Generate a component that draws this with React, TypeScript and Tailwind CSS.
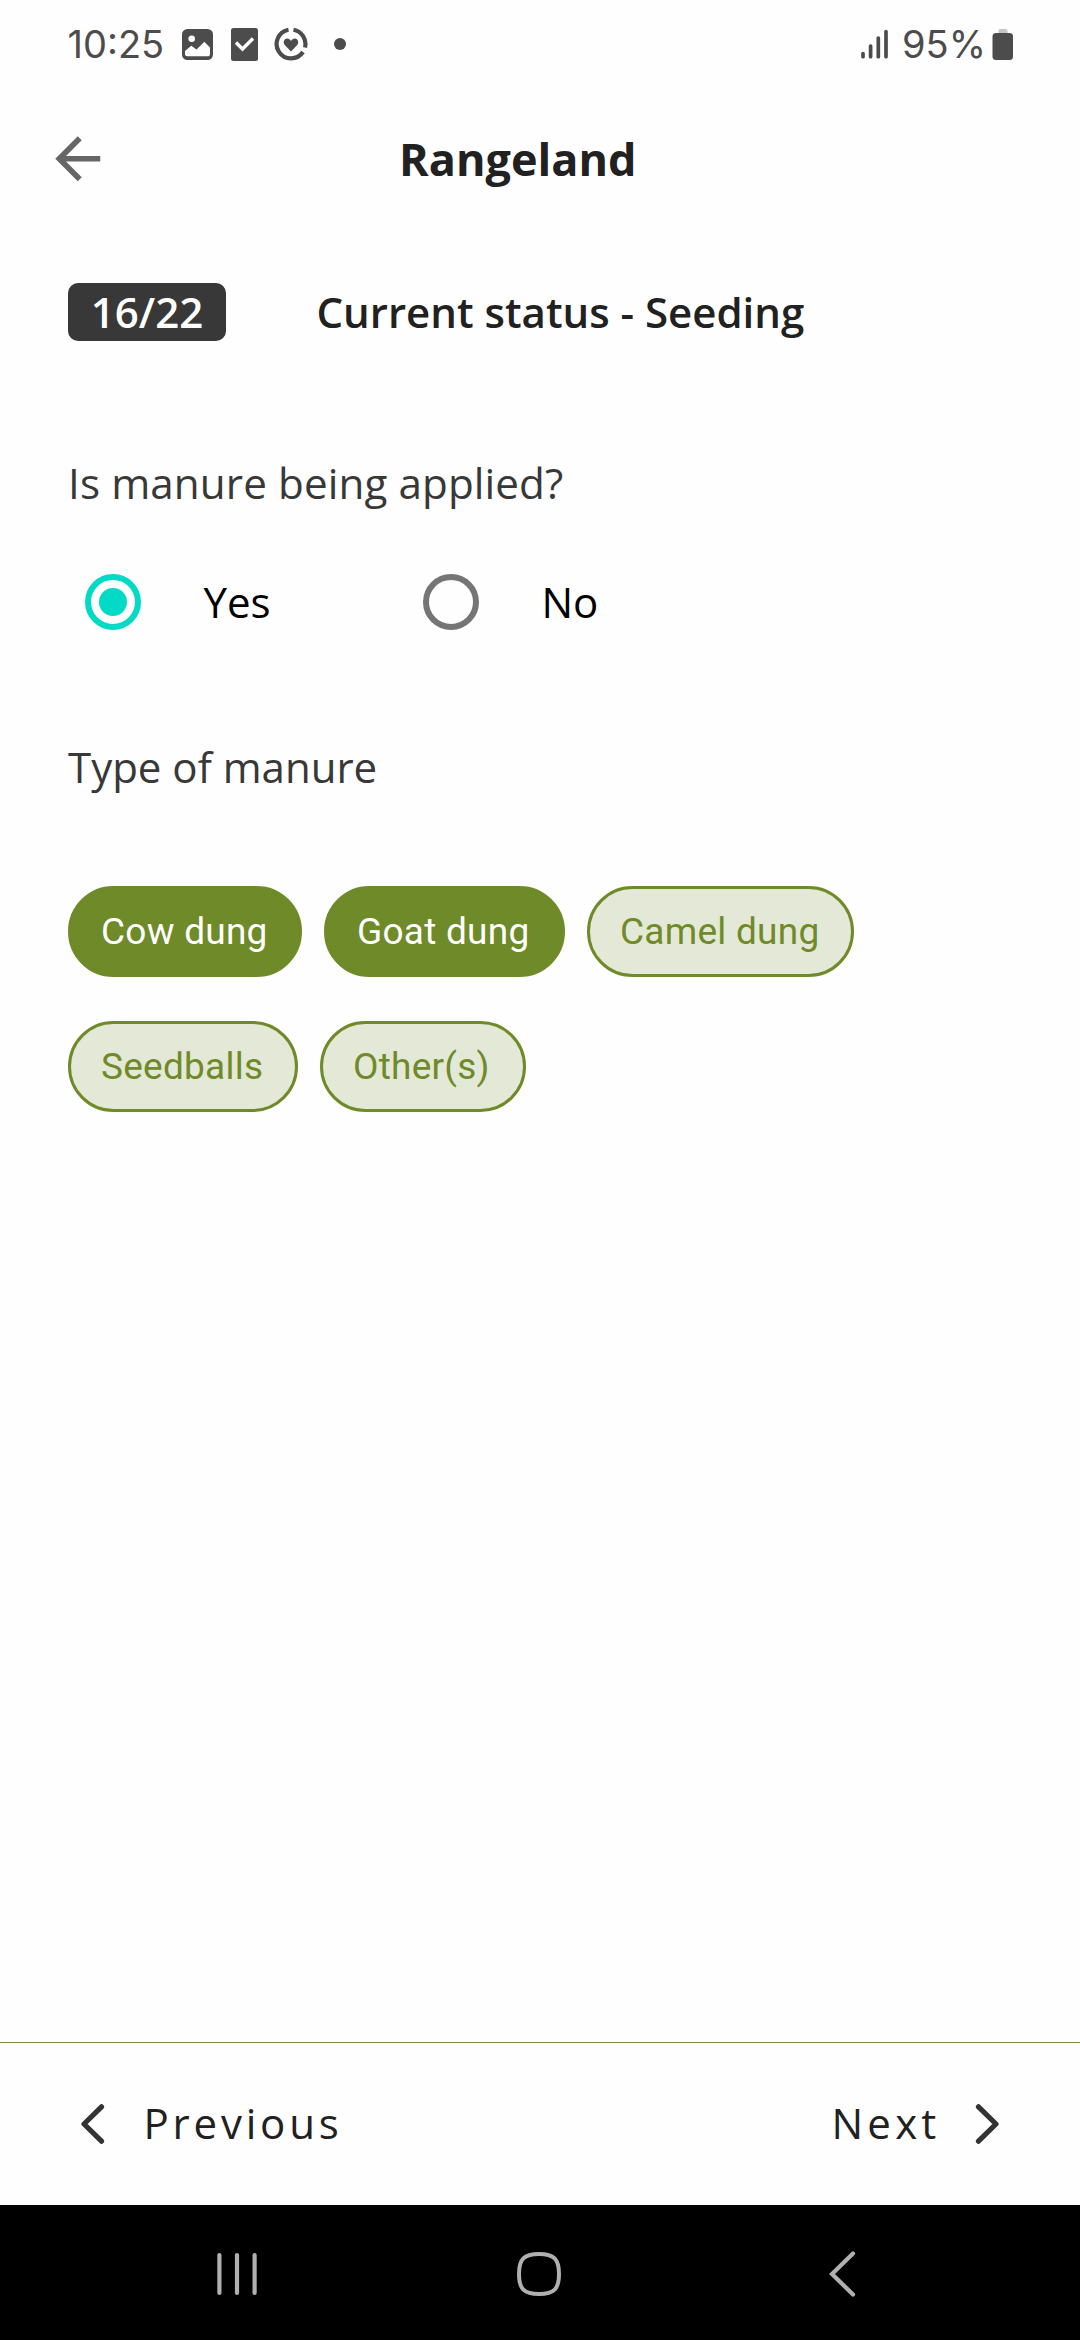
import React, { useState } from "react";

function StatusBar() {
  return (
    <div className="flex h-[88px] shrink-0 items-center justify-between pr-[66px] pl-[67.5px] font-[Inter,sans-serif] text-[#4c4c4c]">
      <div className="flex items-center">
        <span className="w-[114.5px] text-[38px] leading-none whitespace-nowrap">10:25</span>
        <svg className="h-[31px] w-[31px]" viewBox="0 0 31 31">
          <rect width="31" height="31" rx="5.5" fill="#4c4c4c" />
          <circle cx="9.7" cy="9.7" r="3.3" fill="#fefefe" />
          <path d="M3 24.5v-2.500L9.300 16.800l5.200 3.700L22.300 12.800 28 18.500v6.200a2.600 2.600 0 0 1-2.600 2.600H5.600A2.600 2.600 0 0 1 3 24.500Z" fill="#fefefe" />
        </svg>
        <svg className="ml-[18px] h-[33px] w-[27px]" viewBox="0 0 27 33">
          <rect width="27" height="33" rx="2.500" fill="#4c4c4c" />
          <path d="m5 14.500 6.500 6.500L22 10.500" fill="none" stroke="#fefefe" strokeWidth="3.400" />
        </svg>
        <svg className="ml-[16px] h-[34px] w-[34px]" viewBox="0 0 34 34">
          <g fill="none" stroke="#4c4c4c" strokeWidth="4.200">
            <path d="M19.500 2.800A14.400 14.400 0 0 1 31 20.500" />
            <path d="M29 25A14.400 14.400 0 1 1 14.500 2.800" />
          </g>
          <path d="M17 24.500 11 18.300C8.600 15.700 10 11.500 13 11.500c1.900 0 3.200 1 4 2.400.8-1.400 2.100-2.400 4-2.400 3 0 4.400 4.200 2 6.800Z" fill="#4c4c4c" />
        </svg>
        <span className="ml-[26px] h-3 w-3 rounded-full bg-[#4c4c4c]" />
      </div>
      <div className="flex items-center">
        <svg className="h-[30px] w-[28px]" viewBox="0 0 28 30" stroke="#4c4c4c" strokeWidth="3.700" strokeLinecap="round">
          <path d="M2 24.500v3.200M9.600 17v10.700M17.300 9v18.700M25 2.500v25.200" />
        </svg>
        <span className="ml-[13px] w-[90px] text-[38px] leading-none whitespace-nowrap">95%</span>
        <svg className="h-[32px] w-[22px]" viewBox="0 0 22 32">
          <path d="M6.500 6V3a2 2 0 0 1 2-2h5a2 2 0 0 1 2 2v3Z" fill="#c4c4c4" />
          <rect x=".5" y="5" width="20.500" height="27" rx="3.500" fill="#4c4c4c" />
        </svg>
      </div>
    </div>
  );
}

function Header() {
  return (
    <header className="flex h-[141px] shrink-0 items-center pl-[43.5px]">
      <svg className="h-[67.5px] w-[67.5px]" viewBox="0 0 24 24" fill="#666666">
        <path d="M20 11H7.830l5.590-5.590L12 4l-8 8 8 8 1.410-1.410L7.830 13H20v-2z" />
      </svg>
      <h1 className="ml-[288px] text-[45px] leading-none font-bold text-[#212121]">Rangeland</h1>
    </header>
  );
}

function Radio({ label, checked, onSelect }: { label: string; checked: boolean; onSelect: () => void }) {
  return (
    <button onClick={onSelect} className="flex w-[338px] items-center">
      <span
        className={
          checked
            ? "flex h-14 w-14 items-center justify-center rounded-full border-[6px] border-[#03dac5]"
            : "flex h-14 w-14 items-center justify-center rounded-full border-[6px] border-[#757575]"
        }
      >
        {checked && <span className="h-7 w-7 rounded-full bg-[#03dac5]" />}
      </span>
      <span className="ml-[62.5px] text-[42px] leading-[56px] text-black">{label}</span>
    </button>
  );
}

function Chip({ label, width, selected, onToggle }: { label: string; width: string; selected: boolean; onToggle: () => void }) {
  return (
    <button
      onClick={onToggle}
      className={`${width} ${
        selected ? "bg-[#6f8a28] text-white" : "bg-[#e4e8d7] text-[#6f8a28]"
      } flex h-[91px] items-center rounded-full border-[3px] border-[#6f8a28] pl-[30px] font-[Roboto,sans-serif] text-[37px] leading-none tracking-[0.25px] whitespace-nowrap`}
    >
      {label}
    </button>
  );
}

const manureTypes = [
  { label: "Cow dung", width: "w-[234px]" },
  { label: "Goat dung", width: "w-[241px]" },
  { label: "Camel dung", width: "w-[267px]" },
  { label: "Seedballs", width: "w-[230px]" },
  { label: "Other(s)", width: "w-[206px]" },
];

export default function App() {
  const [applied, setApplied] = useState(true);
  const [selected, setSelected] = useState<string[]>(["Cow dung", "Goat dung"]);
  const toggle = (label: string) =>
    setSelected((s) => (s.includes(label) ? s.filter((x) => x !== label) : [...s, label]));

  return (
    <div className="flex h-[2340px] w-[1080px] flex-col overflow-hidden bg-[#fefefe] font-['Open_Sans',sans-serif]">
      <StatusBar />
      <Header />
      <main className="flex flex-1 flex-col px-[68px] pt-[54px] text-[42px] leading-[56px] text-[#383838]">
        <div className="flex h-[58px] items-center font-semibold">
          <span className="flex h-[58px] w-[158px] items-center justify-center rounded-[10px] bg-[#383838] text-white">16/22</span>
          <h2 className="ml-[90.5px] text-[#212121]">Current status - Seeding</h2>
        </div>
        <p className="mt-[114px] text-[42.19px] tracking-[0.1px]">Is manure being applied?</p>
        <div className="mt-[63px] ml-[17px] flex">
          <Radio label="Yes" checked={applied} onSelect={() => setApplied(true)} />
          <Radio label="No" checked={!applied} onSelect={() => setApplied(false)} />
        </div>
        <p className="mt-[109px]">Type of manure</p>
        <div className="mt-[91px] flex w-[800px] flex-wrap gap-x-[22px] gap-y-[44px]">
          {manureTypes.map((t) => (
            <Chip key={t.label} {...t} selected={selected.includes(t.label)} onToggle={() => toggle(t.label)} />
          ))}
        </div>
      </main>
      <footer className="flex h-[163px] shrink-0 items-center justify-between border-t border-[#7c8450] px-[80px] text-[42px] leading-[56px] text-[#212121]">
        <button className="flex items-center">
          <svg className="h-[42px] w-[25px]" viewBox="0 0 25 42" fill="none" stroke="#333333" strokeWidth="5.200" strokeLinecap="round" strokeLinejoin="round">
            <path d="M21.500 3.800 4 21l17.500 17.200" />
          </svg>
          <span className="mb-[2px] ml-[38.5px] tracking-[3.8px]">Previous</span>
        </button>
        <button className="flex items-center">
          <span className="mr-[34.5px] mb-[2px] tracking-[4.2px]">Next</span>
          <svg className="h-[42px] w-[25px]" viewBox="0 0 25 42" fill="none" stroke="#333333" strokeWidth="5.200" strokeLinecap="round" strokeLinejoin="round">
            <path d="M3.500 3.800 21 21 3.500 38.200" />
          </svg>
        </button>
      </footer>
      <nav className="flex h-[135px] shrink-0 items-center bg-black pt-[3px] pl-[217px]">
        <svg className="h-[44px] w-[40px]" viewBox="0 0 40 44" stroke="#b0b0b0" strokeWidth="4.200" strokeLinecap="round">
          <path d="M2.400 3v38M20 3v38M37.600 3v38" />
        </svg>
        <svg className="ml-[260px] h-[44px] w-[44px]" viewBox="0 0 44 44" fill="none" stroke="#b0b0b0" strokeWidth="4">
          <path d="M22 2C37 2 42 7 42 22S37 42 22 42 2 37 2 22 7 2 22 2Z" />
        </svg>
        <svg className="ml-[268px] h-[46px] w-[27px]" viewBox="0 0 27 46" fill="none" stroke="#b0b0b0" strokeWidth="4.200" strokeLinecap="round">
          <path d="M24 2.500 3 23l21 20.500" />
        </svg>
      </nav>
    </div>
  );
}
